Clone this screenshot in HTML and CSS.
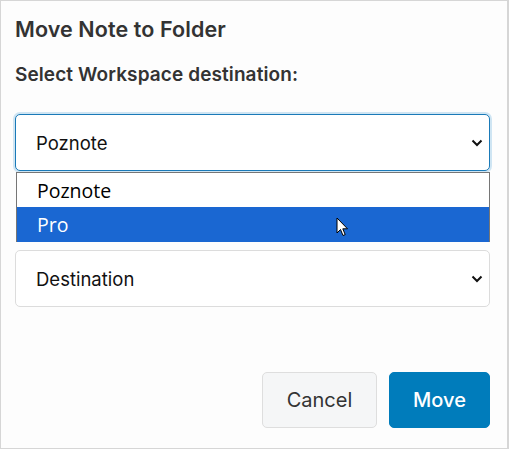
FILE: index.html
```html
<!DOCTYPE html>
<html>
<head>
<meta charset="utf-8">
<link rel="stylesheet" href="styles.css">
</head>
<body>
<div class="modal">
  <h2 class="title">Move Note to Folder</h2>
  <div class="label">Select Workspace destination:</div>
  <div class="field">
    <div class="select focused"><span>Poznote</span>
      <svg class="chev" width="12" height="8" viewBox="0 0 12 8"><path d="M1.5 1.5 L6 6 L10.5 1.5" fill="none" stroke="#111" stroke-width="2"/></svg>
    </div>
    <div class="popup">
      <div class="opt">Poznote</div>
      <div class="opt sel">Pro</div>
      <svg class="cursor" width="14" height="21" viewBox="0 0 14 21"><path d="M1 1 L1 16 L4.5 12.5 L7 18.5 L9.2 17.6 L6.8 11.8 L11.5 11.8 Z" fill="#fff" stroke="#000" stroke-width="1" stroke-linejoin="miter"/></svg>
    </div>
  </div>
  <div class="select second"><span>Destination</span>
    <svg class="chev" width="12" height="8" viewBox="0 0 12 8"><path d="M1.5 1.5 L6 6 L10.5 1.5" fill="none" stroke="#111" stroke-width="2"/></svg>
  </div>
  <div class="actions">
    <button class="btn cancel">Cancel</button>
    <button class="btn move">Move</button>
  </div>
</div>
</body>
</html>
```
FILE: styles.css
```css
html, body { margin: 0; padding: 0; background: #fff; }
body { font-family: Inter, "Liberation Sans", sans-serif; }
.modal {
  width: 509px; height: 449px; box-sizing: border-box;
  border: 1px solid #d6d6d6; border-right-width: 2px;
  background: #fdfdfd;
  padding: 15px 17px 0 14px;
  display: flex; flex-direction: column;
}
.title { margin: 0; font-size: 21.5px; font-weight: 600; color: #333; line-height: 26px; letter-spacing: 0.1px; }
.label { margin-top: 22px; font-size: 19px; font-weight: 600; color: #333; line-height: 22px; letter-spacing: 0.1px; }
.field { position: relative; margin-top: 28px; }
.select {
  height: 57px; box-sizing: border-box;
  border: 1px solid #dcdcdc; border-radius: 5px; background: #fff;
  display: flex; align-items: center; justify-content: space-between;
  padding: 0 6px 0 20px; font-size: 18.5px; color: #111;
}
.select.focused { border-color: #1a7ab8; box-shadow: 0 0 0 2px #cfe5f3; }
.select.second { margin-top: 79px; }
.popup {
  position: absolute; left: 1px; right: 0; top: 58px;
  border: 1px solid #767676; background: #fff; height: 70px; box-sizing: border-box;
  font-family: "Open Sans", Inter, sans-serif; font-size: 19.5px;
}
.opt { height: 34px; display: flex; align-items: center; padding-left: 20px; color: #000; }
.opt.sel { background: #1a67d2; color: #fff; height: 35px; }
.cursor { position: absolute; left: 319px; top: 44px; }
.actions { margin-top: 65px; display: flex; justify-content: flex-end; gap: 12px; }
.btn {
  height: 56px; border-radius: 5px; font-family: Inter, "Liberation Sans", sans-serif;
  font-size: 20px; padding: 0; box-sizing: border-box;
}
.cancel { width: 115px; background: #f5f6f7; border: 1px solid #dedede; color: #333; }
.move { width: 101px; background: #007cbb; border: 1px solid #007cbb; color: #fff; font-weight: 500; }
```
